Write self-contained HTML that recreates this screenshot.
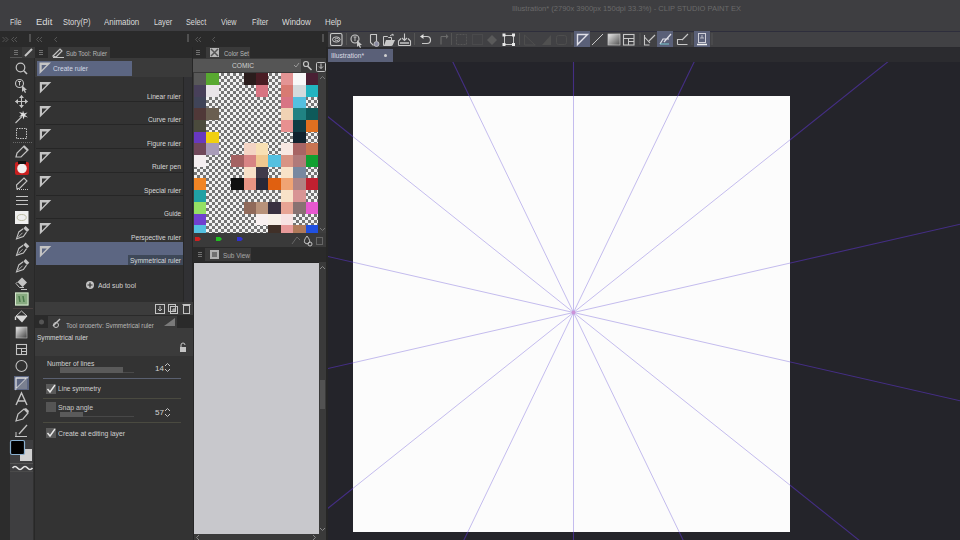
<!DOCTYPE html>
<html><head><meta charset="utf-8">
<style>
*{margin:0;padding:0;box-sizing:border-box}
html,body{width:960px;height:540px;overflow:hidden;background:#262626;font-family:"Liberation Sans",sans-serif;color:#d8d8d8}
.a{position:absolute}
.t{position:absolute;white-space:pre;line-height:1;transform-origin:0 0}
.ck{background-image:conic-gradient(#747474 25%,#f2f2f2 0 50%,#747474 0 75%,#f2f2f2 0);background-size:6px 6px}
</style></head><body>
<div class="a" style="left:0px;top:0px;width:960px;height:31px;background:#3e3e41;"></div>
<div class="t" style="left:512.00px;top:4.57px;font-size:7px;color:#6a6a6a;transform:scaleX(1.074);">Illustration* (2790x 3900px 150dpi 33.3%) - CLIP STUDIO PAINT EX</div>
<div class="t" style="left:10.00px;top:19.36px;font-size:8.2px;color:#dcdcdc;transform:scaleX(0.871);">File</div>
<div class="t" style="left:35.75px;top:19.36px;font-size:8.2px;color:#dcdcdc;transform:scaleX(1.152);">Edit</div>
<div class="t" style="left:62.50px;top:19.36px;font-size:8.2px;color:#dcdcdc;transform:scaleX(0.916);">Story(P)</div>
<div class="t" style="left:103.75px;top:19.36px;font-size:8.2px;color:#dcdcdc;transform:scaleX(0.968);">Animation</div>
<div class="t" style="left:153.75px;top:19.36px;font-size:8.2px;color:#dcdcdc;transform:scaleX(0.891);">Layer</div>
<div class="t" style="left:185.75px;top:19.36px;font-size:8.2px;color:#dcdcdc;transform:scaleX(0.889);">Select</div>
<div class="t" style="left:220.50px;top:19.36px;font-size:8.2px;color:#dcdcdc;transform:scaleX(0.880);">View</div>
<div class="t" style="left:251.75px;top:19.36px;font-size:8.2px;color:#dcdcdc;transform:scaleX(0.893);">Filter</div>
<div class="t" style="left:282.00px;top:19.36px;font-size:8.2px;color:#dcdcdc;transform:scaleX(0.987);">Window</div>
<div class="t" style="left:324.50px;top:19.36px;font-size:8.2px;color:#dcdcdc;transform:scaleX(0.965);">Help</div>
<div class="a" style="left:0px;top:31px;width:328px;height:16px;background:#2a2a2a;"></div>
<svg class="a" style="left:2px;top:36px;" width="10" height="7" viewBox="0 0 10 7"><path d="M0.5 1 L3.0 3.5 L0.5 6" fill="none" stroke="#5a5a5a" stroke-width="0.9"/><path d="M3.5 1 L6.0 3.5 L3.5 6" fill="none" stroke="#5a5a5a" stroke-width="0.9"/></svg>
<svg class="a" style="left:11px;top:36px;" width="10" height="7" viewBox="0 0 10 7"><path d="M3.0 1 L0.5 3.5 L3.0 6" fill="none" stroke="#5a5a5a" stroke-width="0.9"/><path d="M6.0 1 L3.5 3.5 L6.0 6" fill="none" stroke="#5a5a5a" stroke-width="0.9"/></svg>
<div class="a" style="left:29px;top:34px;width:2px;height:8px;background:#505050;"></div>
<svg class="a" style="left:36px;top:36px;" width="10" height="7" viewBox="0 0 10 7"><path d="M3.0 1 L0.5 3.5 L3.0 6" fill="none" stroke="#5a5a5a" stroke-width="0.9"/><path d="M6.0 1 L3.5 3.5 L6.0 6" fill="none" stroke="#5a5a5a" stroke-width="0.9"/></svg>
<svg class="a" style="left:54px;top:36px;" width="7" height="7" viewBox="0 0 7 7"><path d="M3.0 1 L0.5 3.5 L3.0 6" fill="none" stroke="#5a5a5a" stroke-width="0.9"/></svg>
<div class="a" style="left:187px;top:34px;width:2px;height:8px;background:#505050;"></div>
<svg class="a" style="left:195px;top:36px;" width="10" height="7" viewBox="0 0 10 7"><path d="M3.0 1 L0.5 3.5 L3.0 6" fill="none" stroke="#5a5a5a" stroke-width="0.9"/><path d="M6.0 1 L3.5 3.5 L6.0 6" fill="none" stroke="#5a5a5a" stroke-width="0.9"/></svg>
<svg class="a" style="left:212px;top:36px;" width="7" height="7" viewBox="0 0 7 7"><path d="M3.0 1 L0.5 3.5 L3.0 6" fill="none" stroke="#5a5a5a" stroke-width="0.9"/></svg>
<div class="a" style="left:322px;top:34px;width:2px;height:8px;background:#505050;"></div>
<div class="a" style="left:328px;top:31px;width:632px;height:17px;background:#414144;border-top:1px solid #2e2e3c;border-bottom:1px solid #2a2a2e"></div>
<svg class="a" style="left:0;top:0" width="960" height="540"><path d="M327.5 31v17" stroke="#2a2a2a" stroke-width="1"/><rect x="330.5" y="33.5" width="11.5" height="12" rx="1.5" fill="none" stroke="#c8c8c8" stroke-width="1.1"/><ellipse cx="336.3" cy="39.5" rx="3.8" ry="2.6" fill="none" stroke="#c8c8c8" stroke-width="1"/><ellipse cx="336.8" cy="39.5" rx="1.8" ry="1.2" fill="none" stroke="#c8c8c8" stroke-width="0.8"/><path d="M346.5 33v12" stroke="#555555" stroke-width="1"/><path d="M414.5 33v12" stroke="#555555" stroke-width="1"/><path d="M451.5 33v12" stroke="#555555" stroke-width="1"/><path d="M519.5 33v12" stroke="#555555" stroke-width="1"/><path d="M572 33v12" stroke="#555555" stroke-width="1"/><path d="M640 33v12" stroke="#555555" stroke-width="1"/><path d="M692 33v12" stroke="#555555" stroke-width="1"/><path d="M712 33v12" stroke="#555555" stroke-width="1"/><circle cx="355" cy="39" r="4" fill="none" stroke="#c8c8c8" stroke-width="1.1"/><path d="M353.5 37h3M355 37v4" stroke="#c8c8c8" stroke-width="0.9"/><path d="M357 40 L357 47 L358.5 45.5 L360 48 L361 47.5 L360 45 L362 45 Z" fill="#c8c8c8"/><path d="M370.5 34.5 h6 v7 M370.5 34.5 v8 l3 3" fill="none" stroke="#c8c8c8" stroke-width="1.1"/><circle cx="376.5" cy="44" r="2.5" fill="#8a8aa0" stroke="#c8c8c8" stroke-width="0.8"/><path d="M383.5 36.5 h4 l1 1 h3 v8 h-8 z" fill="none" stroke="#c8c8c8" stroke-width="1"/><path d="M384 45.5 L386 40 L395 40 L392.5 45.5 Z" fill="#c8c8c8"/><path d="M390 36 l3 -2 M393 34 v2" stroke="#c8c8c8" stroke-width="1"/><path d="M398.5 45.5 L398.5 41 L401 38.5 M410.5 45.5 V41 L408 38.5 M398.5 45.5 H410.5" fill="none" stroke="#c8c8c8" stroke-width="1.1"/><path d="M404.5 33.5 v7 M402 38 l2.5 2.5 2.5 -2.5" fill="none" stroke="#c8c8c8" stroke-width="1.1"/><path d="M400 43h9" stroke="#c8c8c8" stroke-width="1.5"/><path d="M422 36.5 h5 a3.5 3.5 0 0 1 0 7 h-5" fill="none" stroke="#c8c8c8" stroke-width="1.2"/><path d="M420 36.5 l3.5 -2.5 v5 z" fill="#e0e0e0"/><path d="M446 36.5 h-5 M441 36.5 v8" fill="none" stroke="#6a6a6a" stroke-width="1.1"/><path d="M446 34 l2.5 2.5 -2.5 2.5z" fill="#6a6a6a"/><rect x="456.5" y="34.5" width="10" height="10" fill="none" stroke="#555" stroke-width="1" stroke-dasharray="2 1"/><rect x="472.5" y="34.5" width="10" height="10" fill="none" stroke="#555" stroke-width="1" stroke-dasharray="1 1"/><path d="M487 40 l5 -5 l5 5 l-5 5 z" fill="#5a5a5a"/><rect x="504.5" y="35.5" width="9" height="9" fill="none" stroke="#c8c8c8" stroke-width="1"/><rect x="502.5" y="33.5" width="3" height="3" fill="#e8e8e8"/><rect x="512" y="33.5" width="3" height="3" fill="#e8e8e8"/><rect x="502.5" y="43" width="3" height="3" fill="#e8e8e8"/><rect x="512" y="43" width="3" height="3" fill="#e8e8e8"/><path d="M524.5 35 v10 h11 M524.5 35 L535 45" fill="none" stroke="#4e4e4e" stroke-width="1"/><path d="M542 45 L551 35 V45 Z" fill="#505050"/><rect x="556.5" y="35.5" width="10" height="9" rx="2" fill="none" stroke="#4e4e4e" stroke-width="1"/><rect x="574" y="31" width="16" height="16" fill="#5a6078"/><path d="M577.5 34.5 h10 L577.5 44.5 Z" fill="none" stroke="#e0e0e8" stroke-width="1.4"/><path d="M592 45 L603 34" stroke="#c8c8c8" stroke-width="1"/><defs><linearGradient id="g2" x1="0" y1="0" x2="1" y2="1"><stop offset="0" stop-color="#e8e8e8"/><stop offset="1" stop-color="#505050"/></linearGradient></defs><rect x="608" y="34" width="12" height="11" fill="url(#g2)" stroke="#c8c8c8" stroke-width="0.7"/><rect x="623.5" y="34.5" width="10.5" height="10.5" fill="none" stroke="#c8c8c8" stroke-width="1.1"/><path d="M623.5 38.5 h10.5 M628.5 38.5 v6.5 M628.5 41.5 h5.5" stroke="#c8c8c8" stroke-width="1"/><path d="M644.5 35 v10 h5 M644.5 37 L650 43 M649 41 L655 35" fill="none" stroke="#c8c8c8" stroke-width="1.1"/><rect x="657" y="31" width="16" height="16" fill="#5a6078"/><path d="M660 44 L663 39 H669 M664 42 L671 34" fill="none" stroke="#e0e0e8" stroke-width="1.2"/><path d="M660 44 h9" stroke="#7ac8d0" stroke-width="1"/><path d="M677.5 44.5 h10 M677.5 44.5 v-5 h5 M682 40 L688 34" fill="none" stroke="#c8c8c8" stroke-width="1.1"/><rect x="694" y="31" width="16" height="16" fill="#5a6078"/><rect x="698.5" y="33.5" width="7" height="9" fill="none" stroke="#d0d0d8" stroke-width="1"/><path d="M700 38h4M702 35v3" stroke="#d0d0d8" stroke-width="0.8"/><path d="M697 44.5h10" stroke="#f0f0f0" stroke-width="1.5"/></svg>
<div class="a" style="left:328px;top:48px;width:632px;height:14px;background:#2b2b2f;"></div>
<div class="a" style="left:328px;top:62px;width:632px;height:478px;background:#24242a;"></div>
<div class="a" style="left:328px;top:49px;width:65px;height:13px;background:#5a6078;"></div>
<div class="t" style="left:330.50px;top:52.15px;font-size:7.5px;color:#dcdce4;transform:scaleX(0.889);">Illustration*</div>
<div class="a" style="left:384px;top:54px;width:3px;height:3px;border-radius:2px;background:#d0d0d0"></div>
<svg class="a" style="left:0;top:0" width="960" height="540">
<defs><clipPath id="cv"><rect x="353" y="96" width="437" height="436"/></clipPath>
<clipPath id="ca"><rect x="328" y="62" width="632" height="478"/></clipPath></defs>
<g stroke="#442e84" stroke-width="1.1" clip-path="url(#ca)"><line x1="573.5" y1="1512.5" x2="573.5" y2="-887.5"/><line x1="52.8" y1="1393.7" x2="1094.2" y2="-768.7"/><line x1="-364.7" y1="1060.7" x2="1511.7" y2="-435.7"/><line x1="-596.4" y1="579.5" x2="1743.4" y2="45.5"/><line x1="-596.4" y1="45.5" x2="1743.4" y2="579.5"/><line x1="-364.7" y1="-435.7" x2="1511.7" y2="1060.7"/><line x1="52.8" y1="-768.7" x2="1094.2" y2="1393.7"/></g>
<rect x="353" y="96" width="437" height="436" fill="#fcfcfc"/>
<g stroke="#c4bcee" stroke-width="1" clip-path="url(#cv)"><line x1="573.5" y1="1512.5" x2="573.5" y2="-887.5"/><line x1="52.8" y1="1393.7" x2="1094.2" y2="-768.7"/><line x1="-364.7" y1="1060.7" x2="1511.7" y2="-435.7"/><line x1="-596.4" y1="579.5" x2="1743.4" y2="45.5"/><line x1="-596.4" y1="45.5" x2="1743.4" y2="579.5"/><line x1="-364.7" y1="-435.7" x2="1511.7" y2="1060.7"/><line x1="52.8" y1="-768.7" x2="1094.2" y2="1393.7"/></g><circle cx="573.5" cy="312.5" r="2" fill="#d080d0" opacity="0.7"/>
</svg>
<div class="a" style="left:0px;top:47px;width:10px;height:493px;background:#2c2c2c;"></div>
<div class="a" style="left:10px;top:47px;width:25px;height:493px;background:#313131;"></div>
<div class="a" style="left:10px;top:440px;width:23px;height:100px;background:#3e3e40;"></div>
<div class="a" style="left:34px;top:47px;width:1px;height:493px;background:#282828;"></div>
<div class="a" style="left:10px;top:463px;width:23px;height:1px;background:#555555;"></div>
<div class="a" style="left:10px;top:471px;width:23px;height:1px;background:#4a4a4a;"></div>
<div class="a" style="left:22px;top:47px;width:13px;height:11px;background:#3a3a3a;"></div>
<div class="a" style="left:10px;top:57px;width:12px;height:1px;background:#555555;"></div>
<svg class="a" style="left:0;top:0" width="960" height="540"><g stroke="#707070" stroke-width="1"><path d="M14 50.5h4M14 52.5h4M14 54.5h4"/></g><path d="M25 56 L32 49" stroke="#c4c4c4" stroke-width="2"/></svg>
<svg class="a" style="left:0;top:0" width="960" height="540"><circle cx="20.5" cy="67.5" r="4.3" fill="none" stroke="#c4c4c4" stroke-width="1.2"/><path d="M23.8 70.8 L27 74" stroke="#c4c4c4" stroke-width="1.6"/><circle cx="19.5" cy="83.5" r="4" fill="none" stroke="#c4c4c4" stroke-width="1.1"/><path d="M18 81.5h3M19.5 81.5v4" stroke="#c4c4c4" stroke-width="1"/><path d="M22 85 L22 92 L23.5 90.5 L25 93 L26 92.5 L25 90 L27 90 Z" fill="#c4c4c4"/><path d="M21.5 95.5v12M15.5 101.5h12" stroke="#c4c4c4" stroke-width="1.1"/><path d="M19 98 L21.5 95 L24 98 Z M19 105 L21.5 108 L24 105 Z M18 99 L15 101.5 L18 104 Z M25 99 L28 101.5 L25 104Z" fill="#c4c4c4"/><path d="M15.5 123 L22 116.5" stroke="#c4c4c4" stroke-width="1.1"/><path d="M23 110.5 L24 113.5 L27.5 112.5 L25 115 L28 117.5 L24.5 116.5 L23.5 119.5 L22.5 116 L19 117 L21.5 114.5 L19 112 L22.5 113 Z" fill="#e0e0e0"/><rect x="16.5" y="128.5" width="10" height="10" fill="none" stroke="#c4c4c4" stroke-width="1" stroke-dasharray="1.5 1"/><path d="M13 142.5h20" stroke="#6a6a6a" stroke-width="1" stroke-dasharray="1 1"/><path d="M16 157 L17 153 L24 146 L28 150 L21 157 Z" fill="none" stroke="#c4c4c4" stroke-width="1.2"/><path d="M23 147 L27 151 L28.5 149.5 L24.5 145.5Z" fill="#c4c4c4"/><rect x="15" y="162" width="14" height="13" rx="2" fill="#c82020"/><circle cx="22" cy="168.5" r="4.8" fill="#f0f0f0"/><rect x="18" y="161" width="8" height="3" fill="#101010"/><path d="M17 189 L16.5 185 L24 178 L27 181 L20 188 Z" fill="none" stroke="#c4c4c4" stroke-width="1.1"/><path d="M17 189.5h11" stroke="#c4c4c4" stroke-width="1" stroke-dasharray="1 1"/><path d="M16 196.5h12M16 200.5h12M16 204.5h12" stroke="#c4c4c4" stroke-width="1.1"/><rect x="15" y="211" width="13.5" height="13" fill="#f0f0f0"/><ellipse cx="21.7" cy="217.5" rx="4.5" ry="3" fill="none" stroke="#b0b090" stroke-width="0.8"/><g transform="translate(21.8 233.5) rotate(45)"><rect x="-2.6" y="-8" width="5.2" height="3.2" fill="#c4c4c4"/><path d="M-2.4 -4.3 L-3.2 1 L0 7.5 L3.2 1 L2.4 -4.3" fill="none" stroke="#c4c4c4" stroke-width="1.1"/><path d="M0 -1 V5" stroke="#c4c4c4" stroke-width="0.8"/></g><g transform="translate(21.8 250) rotate(45)"><rect x="-2.6" y="-8" width="5.2" height="3.2" fill="#c4c4c4"/><path d="M-2.4 -4.3 L-3.2 1 L0 7.5 L3.2 1 L2.4 -4.3" fill="none" stroke="#c4c4c4" stroke-width="1.1"/><path d="M0 -1 V5" stroke="#c4c4c4" stroke-width="0.8"/></g><g transform="translate(21.8 266.5) rotate(45)"><rect x="-2.6" y="-8" width="5.2" height="3.2" fill="#c4c4c4"/><path d="M-2.4 -4.3 L-3.2 1 L0 7.5 L3.2 1 L2.4 -4.3" fill="none" stroke="#c4c4c4" stroke-width="1.1"/><path d="M0 -1 V5" stroke="#c4c4c4" stroke-width="0.8"/></g><path d="M17.5 282 L22 277.5 L27 282.5 L22.5 287 Z" fill="#c4c4c4"/><path d="M17.5 282 L16 283.5 L19.5 287.5 H24 L22.5 287" fill="none" stroke="#c4c4c4" stroke-width="1"/><path d="M21 289.5h6" stroke="#c4c4c4" stroke-width="1"/><rect x="15" y="292.5" width="13.5" height="13" fill="#88aa80"/><rect x="15.5" y="293" width="12.5" height="12" fill="none" stroke="#d8e8d0" stroke-width="1"/><path d="M19 296 L20 302 M23 296 L24 302" stroke="#4a7a4a" stroke-width="1.5"/><path d="M13 308.5h20" stroke="#4a4040" stroke-width="1"/><path d="M16 316 L21.5 311 L27 316 Z" fill="none" stroke="#c4c4c4" stroke-width="1"/><path d="M15.5 316 H27.5 L22 322.5 Z" fill="#d8d8d8"/><path d="M15.5 316.5 V320" stroke="#d8d8d8" stroke-width="1.4"/><defs><linearGradient id="gr" x1="0" y1="0" x2="1" y2="1"><stop offset="0" stop-color="#eeeeee"/><stop offset="1" stop-color="#404040"/></linearGradient></defs><rect x="16" y="327" width="11" height="11" fill="url(#gr)" stroke="#c4c4c4" stroke-width="0.6"/><rect x="16.5" y="344.5" width="10" height="10" fill="none" stroke="#c4c4c4" stroke-width="1.1"/><path d="M16.5 348.5h10M21.5 348.5v6M21.5 351.5h5" stroke="#c4c4c4" stroke-width="1"/><circle cx="21.5" cy="366" r="5.5" fill="none" stroke="#c4c4c4" stroke-width="1.1"/><rect x="14" y="376" width="15" height="14" fill="#5c6682"/><path d="M16 378h11L16 389Z" fill="none" stroke="#e0e0e0" stroke-width="1.3"/><path d="M27 378 L27 389 L16 389Z" fill="#7a8090"/><path d="M16 405 L21.5 393 L27 405M18 401h7" fill="none" stroke="#c4c4c4" stroke-width="1.4"/><path d="M16 421 L18 414 L24 409 L28 413 L23 419 Z" fill="none" stroke="#c4c4c4" stroke-width="1.2"/><path d="M24 409 L28 413 L29 411 L26 408Z" fill="#c4c4c4"/><path d="M19 434 L27 425" stroke="#c4c4c4" stroke-width="1.3"/><path d="M15 436.5h12" stroke="#c4c4c4" stroke-width="1"/><path d="M16 432 L16 436" stroke="#c4c4c4" stroke-width="1"/><rect x="20" y="449" width="12" height="12" fill="#d0d0d0"/><rect x="10.5" y="440.5" width="14" height="14" rx="1.5" fill="#000" stroke="#8ab0d0" stroke-width="1.2"/><path d="M12.5 468 q2.5 -3 5 0 t5 0 t5 0 t5 0" fill="none" stroke="#e4e4e4" stroke-width="1.7"/></svg>
<div class="a" style="left:35px;top:47px;width:158px;height:11px;background:#2a2a2a;"></div>
<div class="a" style="left:48px;top:47px;width:62px;height:11px;background:#3a3a3a;"></div>
<svg class="a" style="left:0;top:0" width="960" height="540"><g stroke="#707070" stroke-width="1"><path d="M39 50.5h4M39 52.5h4M39 54.5h4"/></g><path d="M53 56 L60 49 L62 51 L56 57 Z" fill="none" stroke="#c4c4c4" stroke-width="1.2"/><path d="M53 57.5h11" stroke="#c4c4c4" stroke-width="1"/></svg>
<div class="t" style="left:66.00px;top:49.57px;font-size:7px;color:#b8b8b8;transform:scaleX(0.859);">Sub Tool: Ruler</div>
<div class="a" style="left:35px;top:58px;width:158px;height:19px;background:#3a3a3a;"></div>
<div class="a" style="left:37px;top:61px;width:95px;height:15px;background:#5c6682;"></div>
<svg class="a" style="left:0;top:0" width="960" height="540"><path d="M39.5 62.5 H51.0 L39.5 74.0 Z M41.7 65.1 H46.5 L41.7 69.9 Z" fill="#c4c4c4" fill-rule="evenodd" stroke="none"/></svg>
<div class="t" style="left:52.80px;top:64.65px;font-size:7.5px;color:#d4d8e4;transform:scaleX(0.884);">Create ruler</div>
<div class="a" style="left:35px;top:77px;width:158px;height:225px;background:#303030;"></div>
<div class="a" style="left:36px;top:77px;width:147px;height:225px;background:#333333;"></div>
<div class="a" style="left:36px;top:101px;width:147px;height:1px;background:#262626;"></div>
<div class="t" style="left:147.40px;top:92.95px;font-size:7.5px;color:#d8d8d8;transform:scaleX(0.886);">Linear ruler</div>
<div class="a" style="left:36px;top:124px;width:147px;height:1px;background:#262626;"></div>
<div class="t" style="left:148.00px;top:116.45px;font-size:7.5px;color:#d8d8d8;transform:scaleX(0.890);">Curve ruler</div>
<div class="a" style="left:36px;top:148px;width:147px;height:1px;background:#262626;"></div>
<div class="t" style="left:147.00px;top:139.95px;font-size:7.5px;color:#d8d8d8;transform:scaleX(0.886);">Figure ruler</div>
<div class="a" style="left:36px;top:172px;width:147px;height:1px;background:#262626;"></div>
<div class="t" style="left:152.00px;top:163.45px;font-size:7.5px;color:#d8d8d8;transform:scaleX(0.891);">Ruler pen</div>
<div class="a" style="left:36px;top:195px;width:147px;height:1px;background:#262626;"></div>
<div class="t" style="left:144.00px;top:186.95px;font-size:7.5px;color:#d8d8d8;transform:scaleX(0.888);">Special ruler</div>
<div class="a" style="left:36px;top:218px;width:147px;height:1px;background:#262626;"></div>
<div class="t" style="left:164.00px;top:210.45px;font-size:7.5px;color:#d8d8d8;transform:scaleX(0.849);">Guide</div>
<div class="a" style="left:36px;top:242px;width:147px;height:1px;background:#262626;"></div>
<div class="t" style="left:131.00px;top:233.95px;font-size:7.5px;color:#d8d8d8;transform:scaleX(0.888);">Perspective ruler</div>
<div class="a" style="left:36px;top:242px;width:147px;height:23px;background:#5c6682;"></div>
<div class="a" style="left:128px;top:255px;width:55px;height:10px;background:#3e4858;"></div>
<div class="a" style="left:36px;top:266px;width:147px;height:1px;background:#262626;"></div>
<div class="t" style="left:130.00px;top:257.45px;font-size:7.5px;color:#d8d8d8;transform:scaleX(0.874);">Symmetrical ruler</div>
<svg class="a" style="left:0;top:0" width="960" height="540"><path d="M39.8 82 H51.3 L39.8 93.5 Z M42.0 84.6 H46.8 L42.0 89.4 Z" fill="#c4c4c4" fill-rule="evenodd" stroke="none"/><path d="M39.8 106 H51.3 L39.8 117.5 Z M42.0 108.6 H46.8 L42.0 113.4 Z" fill="#c4c4c4" fill-rule="evenodd" stroke="none"/><path d="M39.8 129 H51.3 L39.8 140.5 Z M42.0 131.6 H46.8 L42.0 136.4 Z" fill="#c4c4c4" fill-rule="evenodd" stroke="none"/><path d="M39.8 152 H51.3 L39.8 163.5 Z M42.0 154.6 H46.8 L42.0 159.4 Z" fill="#c4c4c4" fill-rule="evenodd" stroke="none"/><path d="M39.8 176 H51.3 L39.8 187.5 Z M42.0 178.6 H46.8 L42.0 183.4 Z" fill="#c4c4c4" fill-rule="evenodd" stroke="none"/><path d="M39.8 200 H51.3 L39.8 211.5 Z M42.0 202.6 H46.8 L42.0 207.4 Z" fill="#c4c4c4" fill-rule="evenodd" stroke="none"/><path d="M39.8 223 H51.3 L39.8 234.5 Z M42.0 225.6 H46.8 L42.0 230.4 Z" fill="#c4c4c4" fill-rule="evenodd" stroke="none"/><path d="M39.8 246 H51.3 L39.8 257.5 Z M42.0 248.6 H46.8 L42.0 253.4 Z" fill="#c4c4c4" fill-rule="evenodd" stroke="none"/></svg>
<div class="a" style="left:36px;top:265px;width:147px;height:37px;background:#2f2f2f;"></div>
<svg class="a" style="left:0;top:0" width="960" height="540"><circle cx="90" cy="285" r="4" fill="#c4c4c4"/><path d="M87.5 285h5M90 282.5v5" stroke="#2f2f2f" stroke-width="1.2"/></svg>
<div class="t" style="left:98.30px;top:281.65px;font-size:7.5px;color:#d0d0d0;transform:scaleX(0.911);">Add sub tool</div>
<div class="a" style="left:183px;top:77px;width:10px;height:225px;background:#313134;"></div>
<div class="a" style="left:183px;top:77px;width:1px;height:225px;background:#262626;"></div>
<div class="a" style="left:192px;top:47px;width:1px;height:493px;background:#262626;"></div>
<div class="a" style="left:35px;top:302px;width:158px;height:13px;background:#3c3c3c;"></div>
<svg class="a" style="left:0;top:0" width="960" height="540"><g fill="none" stroke="#c4c4c4" stroke-width="1"><rect x="155.5" y="304.5" width="9" height="9"/><path d="M160 306v5M158 309l2 2 2-2"/><rect x="168.5" y="304.5" width="7" height="7"/><rect x="170.5" y="306.5" width="7" height="7"/><path d="M174 308v4M172 310h4"/><rect x="183.5" y="305.5" width="6" height="8"/><path d="M182.5 304.5h8"/></g></svg>
<div class="a" style="left:35px;top:315px;width:158px;height:13px;background:#2a2a2a;"></div>
<div class="a" style="left:48px;top:316px;width:129px;height:12px;background:#3a3a3a;"></div>
<svg class="a" style="left:0;top:0" width="960" height="540"><circle cx="41.5" cy="322" r="2.5" fill="#555"/><path d="M53 326 L60 319" stroke="#c4c4c4" stroke-width="1.5"/><circle cx="56" cy="325" r="2.5" fill="none" stroke="#c4c4c4" stroke-width="1"/><path d="M164 326 L175 318 V326 Z" fill="#7a7a7a"/></svg>
<div class="t" style="left:66.30px;top:322.07px;font-size:7px;color:#b8b8b8;transform:scaleX(0.888);">Tool property: Symmetrical ruler</div>
<div class="a" style="left:35px;top:328px;width:158px;height:28px;background:#3b3b3b;"></div>
<div class="t" style="left:36.70px;top:333.65px;font-size:7.5px;color:#d8d8d8;transform:scaleX(0.874);">Symmetrical ruler</div>
<svg class="a" style="left:0;top:0" width="960" height="540"><rect x="180" y="347" width="6" height="5" fill="#c4c4c4"/><path d="M181 347v-2a2 2 0 0 1 4 0" fill="none" stroke="#c4c4c4" stroke-width="1"/></svg>
<div class="a" style="left:35px;top:356px;width:158px;height:184px;background:#333333;"></div>
<div class="t" style="left:46.50px;top:359.65px;font-size:7.5px;color:#d0d0d0;transform:scaleX(0.900);">Number of lines</div>
<div class="a" style="left:60px;top:367px;width:63px;height:6px;background:#5a5a5a;"></div>
<div class="a" style="left:123px;top:372px;width:11px;height:1px;background:#4a4a4a;"></div>
<div class="t" style="left:154.50px;top:364.65px;font-size:7.5px;color:#d0d0d0;transform:scaleX(1.079);">14</div>
<svg class="a" style="left:0;top:0" width="960" height="540"><path d="M165 366l2.5-2.5 2.5 2.5M165 369l2.5 2.5 2.5-2.5" fill="none" stroke="#c4c4c4" stroke-width="1"/><path d="M165 411l2.5-2.5 2.5 2.5M165 414l2.5 2.5 2.5-2.5" fill="none" stroke="#c4c4c4" stroke-width="1"/></svg>
<div class="a" style="left:43px;top:378px;width:138px;height:1px;background:#5a6070;"></div>
<div class="a" style="left:46px;top:384px;width:10px;height:10px;background:#5a5a5a;"></div>
<svg class="a" style="left:0;top:0" width="960" height="540"><path d="M47.5 389l2.5 3 5-7" fill="none" stroke="#e8e8e8" stroke-width="1.4"/></svg>
<div class="t" style="left:58.20px;top:385.15px;font-size:7.5px;color:#d0d0d0;transform:scaleX(0.878);">Line symmetry</div>
<div class="a" style="left:43px;top:398px;width:138px;height:1px;background:#4a4a40;"></div>
<div class="a" style="left:46px;top:402px;width:10px;height:10px;background:#555555;"></div>
<div class="t" style="left:58.20px;top:403.65px;font-size:7.5px;color:#c8c8c8;transform:scaleX(0.922);">Snap angle</div>
<div class="a" style="left:60px;top:412px;width:23px;height:5px;background:#5a5a5a;"></div>
<div class="a" style="left:83px;top:416px;width:51px;height:1px;background:#484848;"></div>
<div class="t" style="left:154.50px;top:408.65px;font-size:7.5px;color:#d0d0d0;transform:scaleX(1.079);">57</div>
<div class="a" style="left:43px;top:422px;width:138px;height:1px;background:#4a4a40;"></div>
<div class="a" style="left:46px;top:428px;width:10px;height:10px;background:#5a5a5a;"></div>
<svg class="a" style="left:0;top:0" width="960" height="540"><path d="M47.5 433l2.5 3 5-7" fill="none" stroke="#e8e8e8" stroke-width="1.4"/></svg>
<div class="t" style="left:57.80px;top:429.65px;font-size:7.5px;color:#d0d0d0;transform:scaleX(0.913);">Create at editing layer</div>
<div class="a" style="left:193px;top:47px;width:135px;height:11px;background:#2a2a2a;"></div>
<div class="a" style="left:206px;top:47px;width:44px;height:11px;background:#3a3a3a;"></div>
<svg class="a" style="left:0;top:0" width="960" height="540"><g stroke="#707070" stroke-width="1"><path d="M196 50.5h4M196 52.5h4M196 54.5h4"/></g><rect x="210" y="48" width="9" height="9" fill="#b8b8b8"/><path d="M211 49l7 7M218 49l-7 7" stroke="#555" stroke-width="1.5"/></svg>
<div class="t" style="left:224.00px;top:49.57px;font-size:7px;color:#b8b8b8;transform:scaleX(0.857);">Color Set</div>
<div class="a" style="left:193px;top:58px;width:135px;height:189px;background:#3a3a3a;"></div>
<div class="a" style="left:193px;top:59px;width:108px;height:13px;background:#555555;"></div>
<div class="t" style="left:231.50px;top:61.73px;font-size:8px;color:#cfcfcf;transform:scaleX(0.825);">COMIC</div>
<svg class="a" style="left:0;top:0" width="960" height="540"><path d="M294 65l2 2 3-4" fill="none" stroke="#9a9a9a" stroke-width="1"/><circle cx="306" cy="64" r="2.5" fill="none" stroke="#c4c4c4" stroke-width="1.2"/><path d="M307.5 66l4 4" stroke="#c4c4c4" stroke-width="1.6"/><rect x="316.5" y="62.5" width="9" height="9" rx="1" fill="none" stroke="#c4c4c4" stroke-width="1"/><path d="M321 63.5v5M319 66.5l2 2 2-2" fill="none" stroke="#c4c4c4" stroke-width="1"/></svg>
<div class="a ck" style="left:194px;top:73px;width:124px;height:160px"></div>
<div class="a" style="left:194px;top:73px;width:12px;height:12px;background:#585858;"></div>
<div class="a" style="left:206px;top:73px;width:13px;height:12px;background:#58a830;"></div>
<div class="a" style="left:244px;top:73px;width:12px;height:12px;background:#2a1c1c;"></div>
<div class="a" style="left:256px;top:73px;width:12px;height:12px;background:#4a1c24;"></div>
<div class="a" style="left:281px;top:73px;width:12px;height:12px;background:#e49494;"></div>
<div class="a" style="left:293px;top:73px;width:13px;height:12px;background:#f8f8f8;"></div>
<div class="a" style="left:306px;top:73px;width:12px;height:12px;background:#4a2034;"></div>
<div class="a" style="left:194px;top:85px;width:12px;height:12px;background:#48405a;"></div>
<div class="a" style="left:206px;top:85px;width:13px;height:12px;background:#e8e4e8;"></div>
<div class="a" style="left:256px;top:85px;width:12px;height:12px;background:#d87482;"></div>
<div class="a" style="left:281px;top:85px;width:12px;height:12px;background:#d87a72;"></div>
<div class="a" style="left:293px;top:85px;width:13px;height:12px;background:#d4dadc;"></div>
<div class="a" style="left:306px;top:85px;width:12px;height:12px;background:#22b4c0;"></div>
<div class="a" style="left:194px;top:97px;width:12px;height:11px;background:#404458;"></div>
<div class="a" style="left:281px;top:97px;width:12px;height:11px;background:#d87484;"></div>
<div class="a" style="left:293px;top:97px;width:13px;height:11px;background:#54c0e0;"></div>
<div class="a" style="left:194px;top:108px;width:12px;height:12px;background:#503838;"></div>
<div class="a" style="left:206px;top:108px;width:13px;height:12px;background:#6a5e50;"></div>
<div class="a" style="left:281px;top:108px;width:12px;height:12px;background:#f0d2b4;"></div>
<div class="a" style="left:293px;top:108px;width:13px;height:12px;background:#208282;"></div>
<div class="a" style="left:306px;top:108px;width:12px;height:12px;background:#0e5a5a;"></div>
<div class="a" style="left:194px;top:120px;width:12px;height:12px;background:#4a4a3c;"></div>
<div class="a" style="left:281px;top:120px;width:12px;height:12px;background:#e89090;"></div>
<div class="a" style="left:293px;top:120px;width:13px;height:12px;background:#103c44;"></div>
<div class="a" style="left:306px;top:120px;width:12px;height:12px;background:#e07020;"></div>
<div class="a" style="left:194px;top:132px;width:12px;height:11px;background:#6838c0;"></div>
<div class="a" style="left:206px;top:132px;width:13px;height:11px;background:#f0d010;"></div>
<div class="a" style="left:293px;top:132px;width:13px;height:11px;background:#10222e;"></div>
<div class="a" style="left:194px;top:143px;width:12px;height:12px;background:#70485a;"></div>
<div class="a" style="left:206px;top:143px;width:13px;height:12px;background:#a89cb8;"></div>
<div class="a" style="left:244px;top:143px;width:12px;height:12px;background:#f4d4c4;"></div>
<div class="a" style="left:256px;top:143px;width:12px;height:12px;background:#f8e0b4;"></div>
<div class="a" style="left:281px;top:143px;width:12px;height:12px;background:#f8e8e2;"></div>
<div class="a" style="left:293px;top:143px;width:13px;height:12px;background:#a86464;"></div>
<div class="a" style="left:306px;top:143px;width:12px;height:12px;background:#c87452;"></div>
<div class="a" style="left:194px;top:155px;width:12px;height:12px;background:#f4eef0;"></div>
<div class="a" style="left:231px;top:155px;width:13px;height:12px;background:#a46262;"></div>
<div class="a" style="left:244px;top:155px;width:12px;height:12px;background:#d88484;"></div>
<div class="a" style="left:256px;top:155px;width:12px;height:12px;background:#f0c890;"></div>
<div class="a" style="left:268px;top:155px;width:13px;height:12px;background:#54c0e0;"></div>
<div class="a" style="left:281px;top:155px;width:12px;height:12px;background:#d89484;"></div>
<div class="a" style="left:293px;top:155px;width:13px;height:12px;background:#b07a7a;"></div>
<div class="a" style="left:306px;top:155px;width:12px;height:12px;background:#10a030;"></div>
<div class="a" style="left:244px;top:167px;width:12px;height:11px;background:#f8e0c8;"></div>
<div class="a" style="left:256px;top:167px;width:12px;height:11px;background:#403a4a;"></div>
<div class="a" style="left:281px;top:167px;width:12px;height:11px;background:#f8e2c8;"></div>
<div class="a" style="left:293px;top:167px;width:13px;height:11px;background:#7888a0;"></div>
<div class="a" style="left:194px;top:178px;width:12px;height:12px;background:#f08424;"></div>
<div class="a" style="left:231px;top:178px;width:13px;height:12px;background:#101010;"></div>
<div class="a" style="left:244px;top:178px;width:12px;height:12px;background:#e89484;"></div>
<div class="a" style="left:256px;top:178px;width:12px;height:12px;background:#282838;"></div>
<div class="a" style="left:268px;top:178px;width:13px;height:12px;background:#e06010;"></div>
<div class="a" style="left:281px;top:178px;width:12px;height:12px;background:#f0a474;"></div>
<div class="a" style="left:293px;top:178px;width:13px;height:12px;background:#b08484;"></div>
<div class="a" style="left:306px;top:178px;width:12px;height:12px;background:#c02030;"></div>
<div class="a" style="left:194px;top:190px;width:12px;height:12px;background:#20a0a4;"></div>
<div class="a" style="left:281px;top:190px;width:12px;height:12px;background:#f8e2c8;"></div>
<div class="a" style="left:293px;top:190px;width:13px;height:12px;background:#d89494;"></div>
<div class="a" style="left:194px;top:202px;width:12px;height:12px;background:#94e064;"></div>
<div class="a" style="left:244px;top:202px;width:12px;height:12px;background:#906a5a;"></div>
<div class="a" style="left:256px;top:202px;width:12px;height:12px;background:#b8927a;"></div>
<div class="a" style="left:268px;top:202px;width:13px;height:12px;background:#383040;"></div>
<div class="a" style="left:281px;top:202px;width:12px;height:12px;background:#e8a494;"></div>
<div class="a" style="left:293px;top:202px;width:13px;height:12px;background:#887272;"></div>
<div class="a" style="left:306px;top:202px;width:12px;height:12px;background:#e858d0;"></div>
<div class="a" style="left:194px;top:214px;width:12px;height:11px;background:#7040d0;"></div>
<div class="a" style="left:256px;top:214px;width:12px;height:11px;background:#f8f0f0;"></div>
<div class="a" style="left:268px;top:214px;width:13px;height:11px;background:#f8f0e8;"></div>
<div class="a" style="left:281px;top:214px;width:12px;height:11px;background:#f8e2e2;"></div>
<div class="a" style="left:194px;top:225px;width:12px;height:8px;background:#54c0e0;"></div>
<div class="a" style="left:268px;top:225px;width:13px;height:8px;background:#403028;"></div>
<div class="a" style="left:281px;top:225px;width:12px;height:8px;background:#e89a9a;"></div>
<div class="a" style="left:293px;top:225px;width:13px;height:8px;background:#b07a5a;"></div>
<div class="a" style="left:306px;top:225px;width:12px;height:8px;background:#2050e0;"></div>
<div class="a" style="left:318px;top:73px;width:8px;height:160px;background:#3e3e3e;"></div>
<svg class="a" style="left:0;top:0" width="960" height="540"><path d="M320 79l2.5-2.5 2.5 2.5M320 228l2.5 2.5 2.5-2.5" fill="none" stroke="#777" stroke-width="1"/></svg>
<div class="a" style="left:193px;top:233px;width:135px;height:14px;background:#3a3a3a;"></div>
<svg class="a" style="left:0;top:0" width="960" height="540"><path d="M195 237h4l2 2-2 2h-4z" fill="#d02020"/><path d="M216 237h4l2 2-2 2h-4z" fill="#20c020"/><path d="M237 237h4l2 2-2 2h-4z" fill="#3030d0"/><path d="M292 244 L297 237 L300 240" fill="none" stroke="#666" stroke-width="1"/><path d="M307 236 Q303 241 305 243 A3 3 0 0 0 309 243 Q311 241 307 236Z" fill="none" stroke="#c4c4c4" stroke-width="1"/><circle cx="310" cy="244" r="2" fill="none" stroke="#c4c4c4"/><rect x="316.5" y="237.5" width="6" height="7" fill="none" stroke="#666"/></svg>
<div class="a" style="left:193px;top:247px;width:135px;height:15px;background:#2a2a2a;"></div>
<div class="a" style="left:205px;top:248px;width:46px;height:13px;background:#3a3a3a;"></div>
<svg class="a" style="left:0;top:0" width="960" height="540"><g stroke="#707070" stroke-width="1"><path d="M198 252.5h4M198 254.5h4M198 256.5h4"/></g><rect x="210" y="250" width="9" height="9" fill="#b0b0b0"/><rect x="212" y="252" width="5" height="5" fill="#707070"/></svg>
<div class="t" style="left:223.00px;top:251.57px;font-size:7px;color:#a8a8a8;transform:scaleX(0.917);">Sub View</div>
<div class="a" style="left:194px;top:263px;width:125px;height:271px;background:#c8c8cc;"></div>
<div class="a" style="left:194px;top:534px;width:125px;height:6px;background:#3a3a3a;"></div>
<div class="a" style="left:319px;top:262px;width:8px;height:278px;background:#3a3a3a;"></div>
<div class="a" style="left:320px;top:380px;width:5px;height:29px;background:#525252;"></div>
<svg class="a" style="left:0;top:0" width="960" height="540"><path d="M320 269l2.5-2.5 2.5 2.5M320 528l2.5 2.5 2.5-2.5M199 535l-2.5 2.5 2.5 2.5M313 535l2.5 2.5-2.5 2.5" fill="none" stroke="#888" stroke-width="1"/></svg>
<div class="a" style="left:326px;top:47px;width:2px;height:493px;background:#262626;"></div>
</body></html>
